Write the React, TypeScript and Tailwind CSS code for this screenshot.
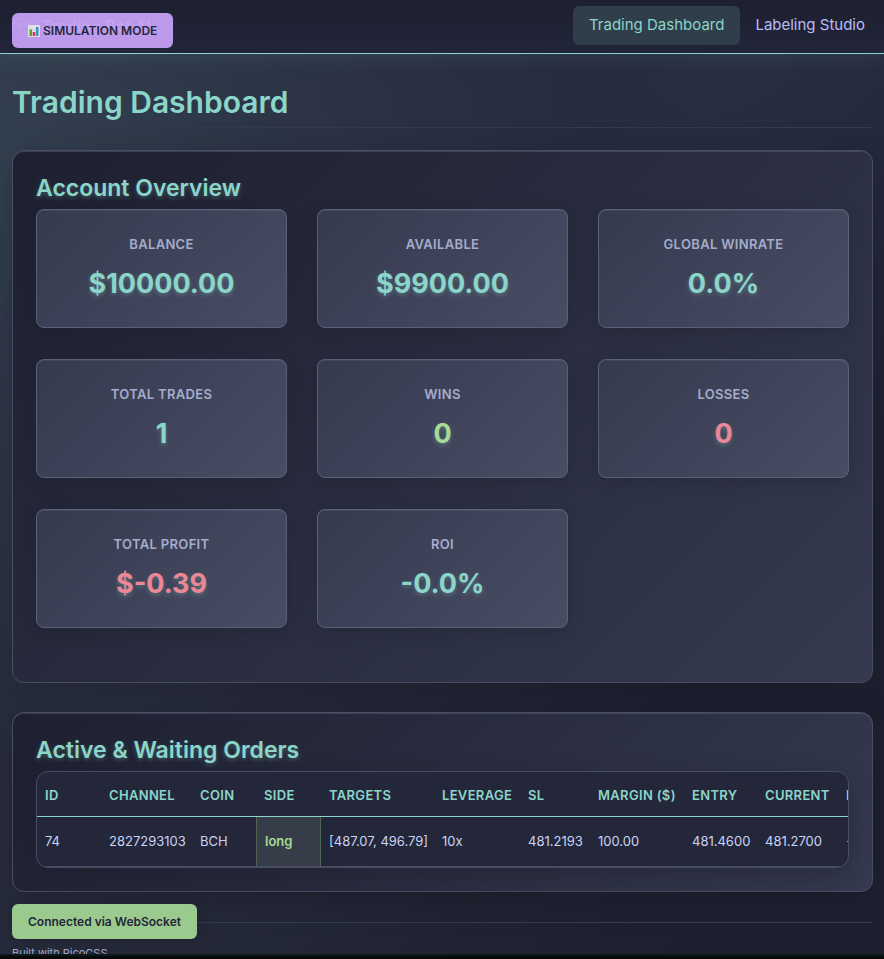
import React from "react";

type Tone = "teal" | "green" | "red";

const toneClass: Record<Tone, string> = {
  teal: "text-[#8bd5ca]",
  green: "text-[#a6da95]",
  red: "text-[#ed8796]",
};

const stats: { label: string; value: string; tone: Tone }[] = [
  { label: "Balance", value: "$10000.00", tone: "teal" },
  { label: "Available", value: "$9900.00", tone: "teal" },
  { label: "Global Winrate", value: "0.0%", tone: "teal" },
  { label: "Total Trades", value: "1", tone: "teal" },
  { label: "Wins", value: "0", tone: "green" },
  { label: "Losses", value: "0", tone: "red" },
  { label: "Total Profit", value: "$-0.39", tone: "red" },
  { label: "ROI", value: "-0.0%", tone: "teal" },
];

const columns = [
  { name: "ID", width: "w-[64px]" },
  { name: "Channel", width: "w-[91px]" },
  { name: "Coin", width: "w-[64px]" },
  { name: "Side", width: "w-[65px]" },
  { name: "Targets", width: "w-[113px]" },
  { name: "Leverage", width: "w-[86px]" },
  { name: "SL", width: "w-[70px]" },
  { name: "Margin ($)", width: "w-[94px]" },
  { name: "Entry", width: "w-[73px]" },
  { name: "Current", width: "w-[81px]" },
  { name: "PnL", width: "w-[80px]" },
];

const orders = [
  ["74", "2827293103", "BCH", "long", "[487.07, 496.79]", "10x", "481.2193", "100.00", "481.4600", "481.2700", "-0.39"],
];

function BarChartIcon() {
  return (
    <svg width="12" height="12" viewBox="0 0 12 12" aria-hidden="true" className="shrink-0">
      <rect width="12" height="12" rx="1" fill="#dfe3e6" />
      <path d="M0 4h12M0 8h12M4 0v12M8 0v12" stroke="#c3ccd2" strokeWidth="0.5" />
      <rect x="1.5" y="4.5" width="2.5" height="6.5" fill="#5c9e31" />
      <rect x="4.8" y="7" width="2.5" height="4" fill="#dc2f4b" />
      <rect x="8" y="2" width="2.5" height="9" fill="#3c8fd0" />
    </svg>
  );
}

function Card({ title, className, children }: { title: string; className: string; children: React.ReactNode }) {
  return (
    <section
      className={
        "rounded-xl border border-[#494d64] bg-linear-135 from-[#1e2030] to-[#363a4f] px-[23px] pt-[21px] shadow-[0_8px_32px_rgba(24,25,38,0.4),inset_0_1px_0_rgba(91,96,120,0.5)] " +
        className
      }
    >
      <h2 className="mb-[5px] text-[23px] leading-8 font-semibold text-[#8bd5ca] [text-shadow:0_2px_4px_rgba(139,213,202,0.3)]">
        {title}
      </h2>
      {children}
    </section>
  );
}

export default function App() {
  return (
    <div className="flex h-screen flex-col overflow-hidden bg-[#050d0f] font-[Inter,'Liberation_Sans',sans-serif] text-[#cad3f5]">
      <div className="relative min-h-0 flex-1 overflow-hidden bg-[radial-gradient(circle_at_0%_18%,rgba(139,213,202,0.15)_0%,transparent_50%),radial-gradient(circle_at_85%_0%,rgba(138,173,244,0.05)_0%,transparent_40%),radial-gradient(circle_at_15%_90%,rgba(166,218,149,0.04)_0%,transparent_50%),linear-gradient(135deg,#24273a_0%,#24273a_45%,#1e2030_75%)]">
        <header className="flex h-[54px] items-start justify-between border-b border-[#8bd5ca] bg-linear-to-b from-[#1e2030] to-[#222539] pt-1.5 pr-1 pl-3 shadow-[0_4px_20px_rgba(139,213,202,0.1)]">
          <div className="flex h-[39px] items-center gap-3 font-semibold text-[#8bd5ca]">
            <svg width="18" height="18" viewBox="0 0 18 18" fill="none" stroke="currentColor" aria-hidden="true">
              <path d="M1 5l8-4 8 4-8 4zM1 5v8M9 9v8M17 5v8" />
            </svg>
            <span className="text-base">Trading Bot AI</span>
          </div>
          <nav className="flex text-[15px]">
            <a href="#dashboard" className="flex h-[39px] items-center rounded-md bg-[#303d4a] px-4 text-[#8bd5ca]">
              Trading Dashboard
            </a>
            <a href="#labeling" className="flex h-[39px] items-center px-[15px] text-[#b7bdf8]">
              Labeling Studio
            </a>
          </nav>
        </header>

        <main className="pr-[11px] pl-3">
          <h1 className="mb-[22px] border-b border-[#363a4f] pt-7 pb-[5px] text-[30px] leading-10 font-semibold text-[#8bd5ca]">
            Trading Dashboard
          </h1>

          <Card title="Account Overview" className="pb-[54px]">
            <dl className="grid grid-cols-3 gap-x-[30px] gap-y-[31px]">
              {stats.map((s) => (
                <div
                  key={s.label}
                  className="rounded-lg border border-[#5b6078] bg-linear-135 from-[#363a4f] to-[#494d64] pt-6 pb-[25px] text-center shadow-[0_4px_16px_rgba(24,25,38,0.3),inset_0_1px_0_rgba(139,213,202,0.1)]"
                >
                  <dt className="text-[13px] leading-5 font-semibold tracking-wide text-[#a5adcb] uppercase">{s.label}</dt>
                  <dd
                    className={
                      "mt-3 text-[27px] leading-9 font-bold [text-shadow:0_2px_4px_rgba(139,213,202,0.3)] " + toneClass[s.tone]
                    }
                  >
                    {s.value}
                  </dd>
                </div>
              ))}
            </dl>
          </Card>

          <Card title="Active & Waiting Orders" className="mt-[29px] pb-[23px]">
            <div className="overflow-hidden rounded-xl border border-[#494d64] bg-[#24273a] shadow-[0_8px_24px_rgba(24,25,38,0.4)]">
              <table className="w-[881px] table-fixed border-separate border-spacing-0 text-left text-[13px] leading-5 whitespace-nowrap">
                <thead>
                  <tr>
                    {columns.map((c) => (
                      <th
                        key={c.name}
                        scope="col"
                        className={"h-[45px] border-b border-[#8bd5ca] pt-0.5 pr-[7px] pl-2 font-semibold tracking-wide text-[#8bd5ca] uppercase " + c.width}
                      >
                        {c.name}
                      </th>
                    ))}
                  </tr>
                </thead>
                <tbody>
                  {orders.map((row) => (
                    <tr key={row[0]}>
                      {row.map((cell, i) => (
                        <td
                          key={columns[i].name}
                          className={
                            "h-[50px] border-b border-[#494d64] pr-[7px] pb-0.5 pl-2 " +
                            (i === 3
                              ? "border-x border-x-[#4f6657] bg-[#363d48] font-semibold text-[#a6da95]"
                              : i === 10
                                ? "text-[#ed8796]"
                                : "")
                          }
                        >
                          {cell}
                        </td>
                      ))}
                    </tr>
                  ))}
                </tbody>
              </table>
            </div>
          </Card>

          <footer className="mt-[30px] border-t border-[#363a4f] pt-[22px] text-[11px] leading-4 text-[#a5adcb]">
            Built with PicoCSS
          </footer>
        </main>

        <div className="absolute top-[13px] left-3 flex h-[35px] items-center gap-[3px] rounded-md bg-[#c6a0f6]/94 px-4 text-xs font-semibold text-[#24273a]">
          <BarChartIcon />
          SIMULATION MODE
        </div>
        <div
          role="status"
          className="absolute bottom-[15px] left-3 flex h-[35px] items-center rounded-md bg-[#9bca8f] px-4 text-xs font-semibold text-[#24273a] shadow-[0_4px_12px_rgba(24,25,38,0.4)]"
        >
          Connected via WebSocket
        </div>
      </div>
      <div className="h-[5px] shrink-0 border-t-2 border-[#081c1e] bg-[#0b0809]" />
    </div>
  );
}
